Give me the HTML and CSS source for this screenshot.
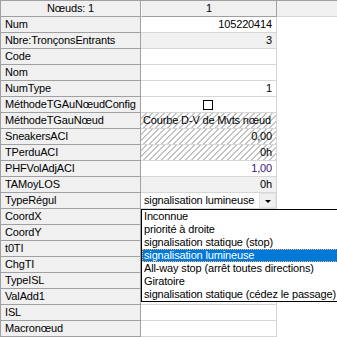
FILE: index.html
```html
<!DOCTYPE html>
<html>
<head>
    <title>Nœuds</title>
    <link rel="stylesheet" href="styles.css">
</head>
<body>
<div class="grid">
    <div class="hdr name">Nœuds: 1</div>
    <div class="hdr val">1</div>
    <div class="hdr rest"></div>

    <div class="name">Num</div>
    <div class="val num">105220414</div>
    <div class="rest"></div>

    <div class="name">Nbre:TronçonsEntrants</div>
    <div class="val num ro">3</div>
    <div class="rest"></div>

    <div class="name">Code</div>
    <div class="val"></div>
    <div class="rest"></div>

    <div class="name">Nom</div>
    <div class="val"></div>
    <div class="rest"></div>

    <div class="name">NumType</div>
    <div class="val num">1</div>
    <div class="rest"></div>

    <div class="name">MéthodeTGAuNœudConfig</div>
    <div class="val check"><span class="box"></span></div>
    <div class="rest"></div>

    <div class="name">MéthodeTGauNœud</div>
    <div class="val hatch">Courbe D-V de Mvts nœud</div>
    <div class="rest"></div>

    <div class="name">SneakersACI</div>
    <div class="val num hatch">0,00</div>
    <div class="rest"></div>

    <div class="name">TPerduACI</div>
    <div class="val num hatch">0h</div>
    <div class="rest"></div>

    <div class="name">PHFVolAdjACI</div>
    <div class="val num edit">1,00</div>
    <div class="rest"></div>

    <div class="name">TAMoyLOS</div>
    <div class="val num ro">0h</div>
    <div class="rest"></div>

    <div class="name">TypeRégul</div>
    <div class="val combo"><span class="combo-text">signalisation lumineuse</span><span class="combo-btn"></span></div>
    <div class="rest"></div>

    <div class="name">CoordX</div>
    <div class="val"></div>
    <div class="rest"></div>

    <div class="name">CoordY</div>
    <div class="val"></div>
    <div class="rest"></div>

    <div class="name">t0TI</div>
    <div class="val"></div>
    <div class="rest"></div>

    <div class="name">ChgTI</div>
    <div class="val"></div>
    <div class="rest"></div>

    <div class="name">TypeISL</div>
    <div class="val"></div>
    <div class="rest"></div>

    <div class="name">ValAdd1</div>
    <div class="val"></div>
    <div class="rest"></div>

    <div class="name">ISL</div>
    <div class="val"></div>
    <div class="rest"></div>

    <div class="name">Macronœud</div>
    <div class="val"></div>
    <div class="rest"></div>

    <ul class="dropdown">
        <li>Inconnue</li>
        <li>priorité à droite</li>
        <li>signalisation statique (stop)</li>
        <li class="selected">signalisation lumineuse</li>
        <li>All-way stop (arrêt toutes directions)</li>
        <li>Giratoire</li>
        <li>signalisation statique (cédez le passage)</li>
    </ul>
</div>
</body>
</html>
```

FILE: styles.css
```css
body {
    margin: 0;
    padding: 0;
    background-color: #fff;
    font-family: 'Liberation Sans', Arial, sans-serif;
    font-size: 11px;
    letter-spacing: -0.15px;
    color: #000;
}

.grid {
    position: relative;
    display: grid;
    grid-template-columns: 140px 136px 1fr;
    grid-auto-rows: 16px;
    width: 337px;
    box-sizing: border-box;
    border-left: 1px solid #a0a0a0;
    border-top: 1px solid #a0a0a0;
}

.grid > div {
    box-sizing: border-box;
    line-height: 15px;
    white-space: nowrap;
    overflow: hidden;
}

/* row headers */
.name {
    background-color: #f0f0f0;
    border-right: 1px solid #a0a0a0;
    border-bottom: 1px solid #a0a0a0;
    padding-left: 4px;
}

/* values */
.val {
    background-color: #fff;
    border-right: 1px solid #d6d6d6;
    border-bottom: 1px solid #d6d6d6;
    padding: 0 4px 0 2px;
}

.rest {
    background-color: #fff;
}

.hdr {
    background-color: #f0f0f0;
    border-bottom: 1px solid #a0a0a0;
    text-align: center;
    padding: 0;
}

.hdr.val {
    border-left: 1px solid #fff;
    border-right: 1px solid #a0a0a0;
}

.hdr.rest {
    border-bottom: 1px solid #d6d6d6;
}

.num {
    text-align: right;
}

.ro {
    background-color: #f0f0f0;
}

.edit {
    color: #3c1478;
}

.hatch {
    background-color: #fff;
    background-image: repeating-linear-gradient(135deg, #fff 0, #fff 3.3px, #c4c4c4 3.3px, #c4c4c4 4.25px);
}

.check {
    display: flex;
    justify-content: center;
    align-items: center;
}

.box {
    width: 10px;
    height: 10px;
    box-sizing: border-box;
    border: 1px solid #000;
    background-color: #fff;
}

.combo {
    display: flex;
    align-items: center;
    justify-content: space-between;
    padding: 0 0 0 3px;
}

.combo-text {
    flex: 1;
}

.combo-btn {
    position: relative;
    width: 17px;
    height: 15px;
    box-sizing: border-box;
    background-color: #f0f0f0;
    border: 1px solid #e3e3e3;
}

.combo-btn::after {
    content: "";
    position: absolute;
    left: 5px;
    top: 6px;
    border-left: 3px solid transparent;
    border-right: 3px solid transparent;
    border-top: 3px solid #000;
}

/* dropped list */
.dropdown {
    position: absolute;
    left: 140px;
    top: 208px;
    width: 196px;
    margin: 0;
    padding: 0;
    list-style: none;
    background-color: #fff;
    border: 1px solid #000;
}

.dropdown li {
    height: 13px;
    line-height: 13px;
    padding-left: 2px;
    white-space: nowrap;
}

.dropdown .selected {
    background-color: #0078d7;
    color: #fff;
    outline: 1px dotted #f2b766;
    outline-offset: -1px;
}
```
